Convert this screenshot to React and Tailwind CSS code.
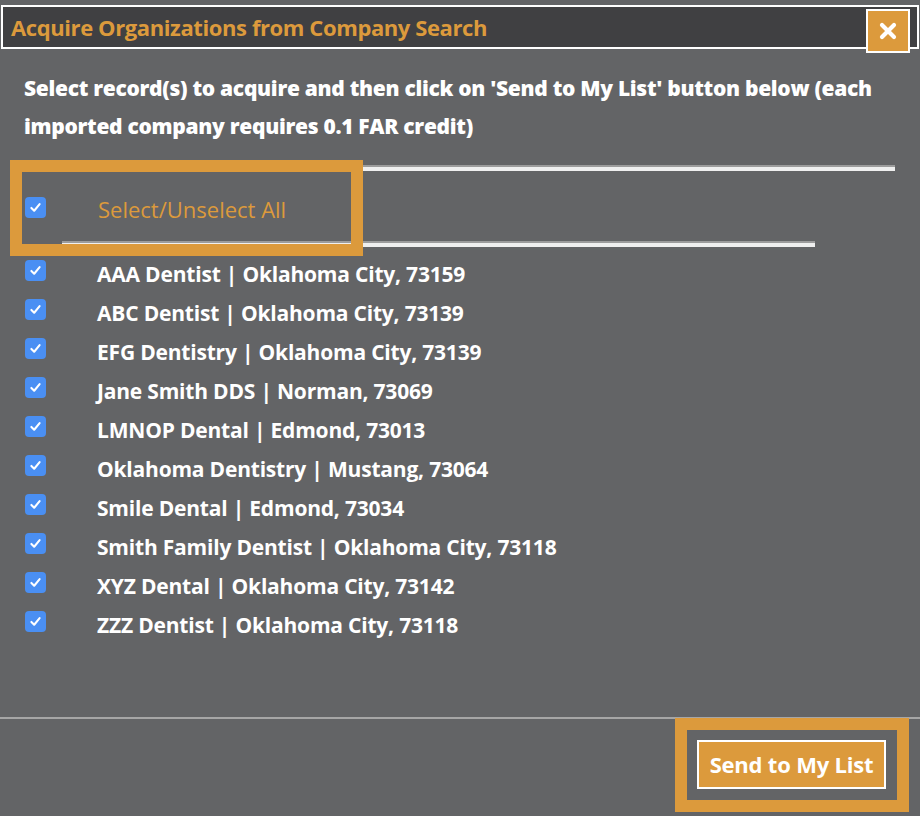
import React, { useState } from "react"

const companies = [
  "AAA Dentist | Oklahoma City, 73159",
  "ABC Dentist | Oklahoma City, 73139",
  "EFG Dentistry | Oklahoma City, 73139",
  "Jane Smith DDS | Norman, 73069",
  "LMNOP Dental | Edmond, 73013",
  "Oklahoma Dentistry | Mustang, 73064",
  "Smile Dental | Edmond, 73034",
  "Smith Family Dentist | Oklahoma City, 73118",
  "XYZ Dental | Oklahoma City, 73142",
  "ZZZ Dentist | Oklahoma City, 73118",
]

const font = { fontFamily: "'Open Sans', 'Noto Sans', sans-serif" }

const Check = ({ checked, onClick }) => (
  <button
    onClick={onClick}
    className={`w-[21px] h-[21px] rounded-[4px] flex items-center justify-center ${
      checked ? "bg-[#4a8ff3]" : "bg-white border border-gray-400"
    }`}
  >
    {checked && (
      <svg width="13" height="13" viewBox="0 0 12 12" fill="none">
        <path d="M2.2 6.4 L4.8 9 L9.8 2.8" stroke="white" strokeWidth="1.9" strokeLinecap="round" strokeLinejoin="round" />
      </svg>
    )}
  </button>
)

const Divider = ({ className }) => (
  <div className={`h-[6px] border-t-2 border-[#9c9c9c] bg-[#efefef] ${className}`} />
)

export default function App() {
  const [selected, setSelected] = useState(companies.map(() => true))
  const allOn = selected.every(Boolean)

  const toggle = (i) => setSelected((s) => s.map((v, j) => (j === i ? !v : v)))

  return (
    <div className="relative w-[920px] h-[816px] bg-[#636466] flex flex-col overflow-hidden" style={font}>
      {/* Header */}
      <div className="mt-[5px] ml-px w-[918px] h-[44px] bg-[#404042] border-2 border-white flex items-center pl-[8px]">
        <h1 className="text-[22px] font-bold text-[#dc9a3c] tracking-[-0.4px]">
          Acquire Organizations from Company Search
        </h1>
      </div>
      <button className="absolute left-[866px] top-[9px] w-[44px] h-[44px] bg-[#dc9a3c] border-2 border-white flex items-center justify-center">
        <svg width="20" height="20" viewBox="0 0 20 20">
          <path d="M4 4 L16 16 M16 4 L4 16" stroke="white" strokeWidth="4.2" strokeLinecap="round" />
        </svg>
      </button>

      <p className="mt-[20px] px-[24px] text-[21px] leading-[38px] font-extrabold text-white tracking-[-0.3px]">
        Select record(s) to acquire and then click on 'Send to My List' button below (each imported company
        requires 0.1 FAR credit)
      </p>

      {/* Select all */}
      <div className="relative mt-[20px]">
        <Divider className="ml-[12px] w-[883px]" />
        <div className="h-[70px] flex items-center pl-[25px]">
          <div className="mt-[2px]">
            <Check checked={allOn} onClick={() => setSelected(companies.map(() => !allOn))} />
          </div>
          <span className="ml-[52px] mt-[6px] text-[22px] text-[#dc9a3c]">Select/Unselect All</span>
        </div>
        <Divider className="ml-[62px] w-[753px]" />
        <div className="absolute left-[10px] top-[-5px] w-[353px] h-[96px] border-[12px] border-[#dc9a3c] pointer-events-none" />
      </div>

      {/* List */}
      <ul className="pt-[8px]">
        {companies.map((c, i) => (
          <li key={c} className="h-[39px] flex items-center pl-[25px]">
            <div className="-mt-[8px]">
              <Check checked={selected[i]} onClick={() => toggle(i)} />
            </div>
            <span className="ml-[51px] text-[21px] font-bold text-white tracking-[-0.2px]">{c}</span>
          </li>
        ))}
      </ul>

      {/* Footer */}
      <div className="mt-auto mb-[4px]">
        <div className="h-[2px] bg-[#a6a6a6]" />
        <div className="flex justify-end pr-[11px]">
          <div className="-mt-[1px] border-[12px] border-[#dc9a3c] p-[10px] pr-[11px] pb-[11px]">
            <button className="w-[189px] h-[49px] bg-[#dc9a3c] border-2 border-white text-white text-[22px] font-bold tracking-[-0.2px]">
              Send to My List
            </button>
          </div>
        </div>
      </div>
    </div>
  )
}
